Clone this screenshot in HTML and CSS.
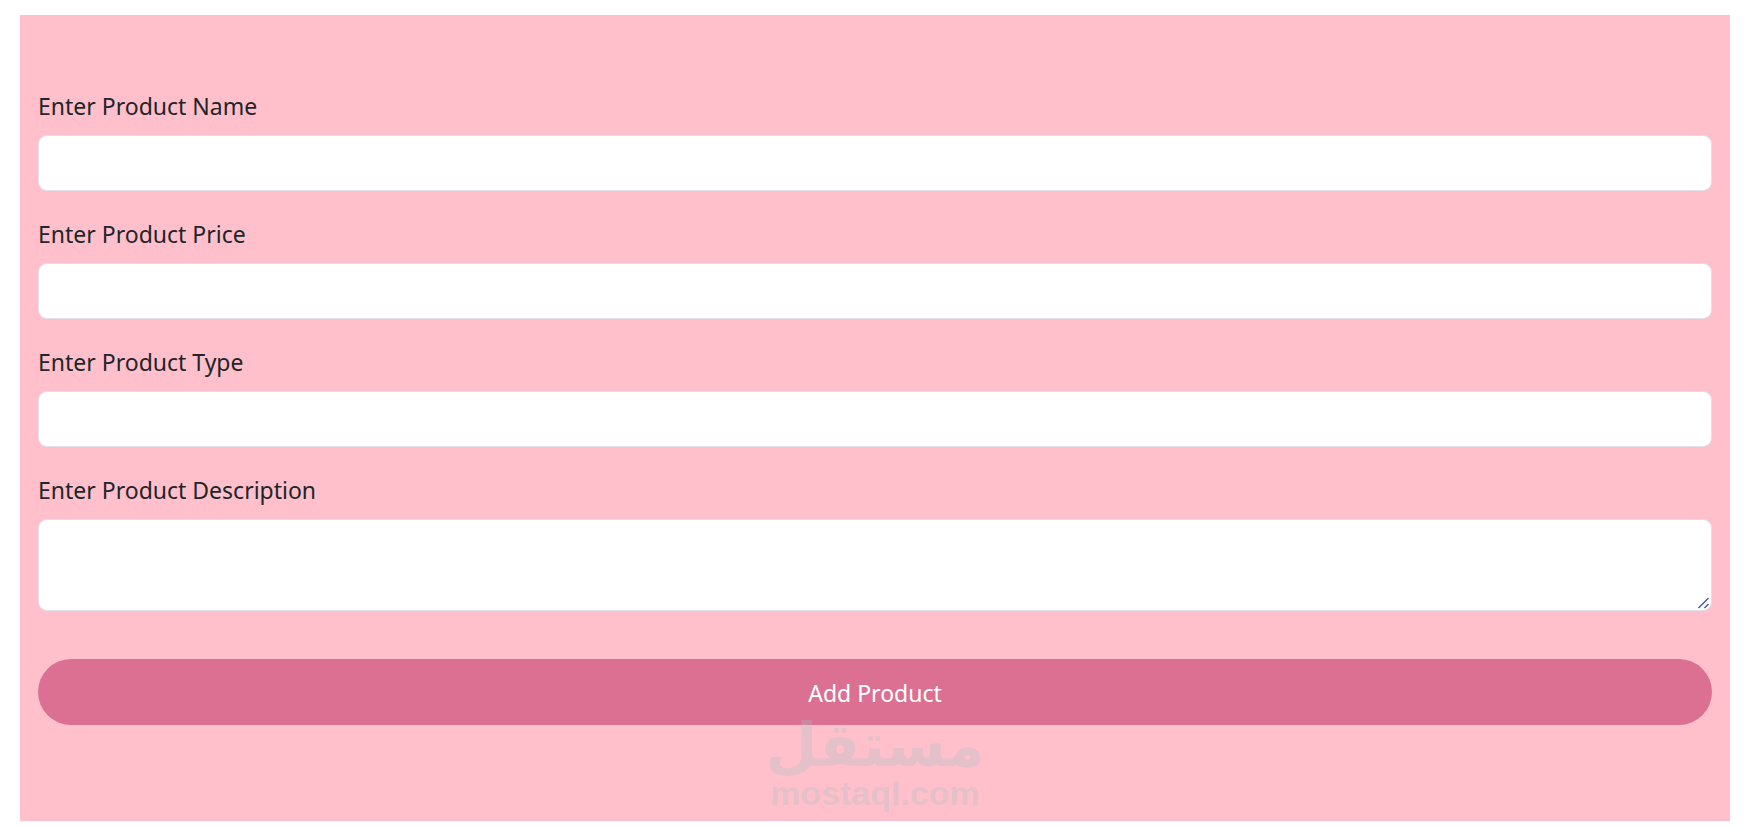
FILE: index.html
```
<!DOCTYPE html>
<html lang="en">
<head>
    <meta charset="UTF-8">
    <meta name="viewport" content="width=device-width, initial-scale=1.0">
    <title>Add Product</title>
    <link rel="stylesheet" href="styles.css">
</head>
<body>

<form class="product-form">
    <div class="input-field">
        <label for="productName">Enter Product Name</label>
        <input type="text" id="productName" class="form-control">
    </div>
    <div class="input-field">
        <label for="productPrice">Enter Product Price</label>
        <input type="text" id="productPrice" class="form-control">
    </div>
    <div class="input-field">
        <label for="productType">Enter Product Type</label>
        <input type="text" id="productType" class="form-control">
    </div>
    <div class="input-field">
        <label for="productDescription">Enter Product Description</label>
        <textarea id="productDescription" class="form-control"></textarea>
    </div>
    <button type="button" class="add-button">Add Product</button>

    <div class="watermark">
        <span class="watermark-name" lang="ar" dir="rtl">مستقل</span>
        <span class="watermark-site">mostaql.com</span>
    </div>
</form>

</body>
</html>
```
FILE: styles.css
```
* {
    box-sizing: border-box;
}

body {
    background-color: #ffffff;
    font-family: "Segoe UI", "Noto Sans", sans-serif;
    font-size: 23px;
    line-height: 36px;
    color: #212529;
    margin: 0;
    padding: 15px 22px 8px 20px;
}

.product-form {
    position: relative;
    background-color: pink;
    padding: 73px 18px 96px;
}

.input-field {
    margin-bottom: 25px;
}

.input-field label {
    display: block;
    margin-bottom: 11px;
}

.form-control {
    display: block;
    width: 100%;
    height: 56px;
    padding: 9px 18px;
    border: 1px solid #dee2e6;
    border-radius: 9px;
    background-color: #ffffff;
    font: inherit;
    color: inherit;
}

textarea.form-control {
    height: 92px;
    resize: vertical;
}

/* Resize handle of the description box */
textarea.form-control::-webkit-resizer {
    background: url("data:image/svg+xml,%3Csvg xmlns='http://www.w3.org/2000/svg' width='15' height='15'%3E%3Cpath d='M2.5 13L12.5 3M8.5 13L12.5 9' stroke='%234f5f8f' stroke-width='1.5'/%3E%3C/svg%3E") no-repeat right bottom;
}

.add-button {
    display: block;
    width: 100%;
    margin-top: 48px;
    padding: 16px 15px 14px;
    border: none;
    border-radius: 33px;
    background-color: palevioletred;
    color: white;
    font: inherit;
    cursor: pointer;
}

/* Watermark over the bottom of the form */
.watermark {
    position: absolute;
    left: 0;
    right: 0;
    bottom: 10px;
    display: flex;
    flex-direction: column;
    align-items: center;
    color: rgb(160, 196, 195);
    opacity: 0.28;
    font-weight: bold;
    pointer-events: none;
}

.watermark-name {
    font-family: "DejaVu Sans", sans-serif;
    font-size: 60px;
    line-height: 60px;
}

.watermark-site {
    font-family: "Liberation Sans", Arial, sans-serif;
    font-size: 34px;
    line-height: 36px;
}
```
